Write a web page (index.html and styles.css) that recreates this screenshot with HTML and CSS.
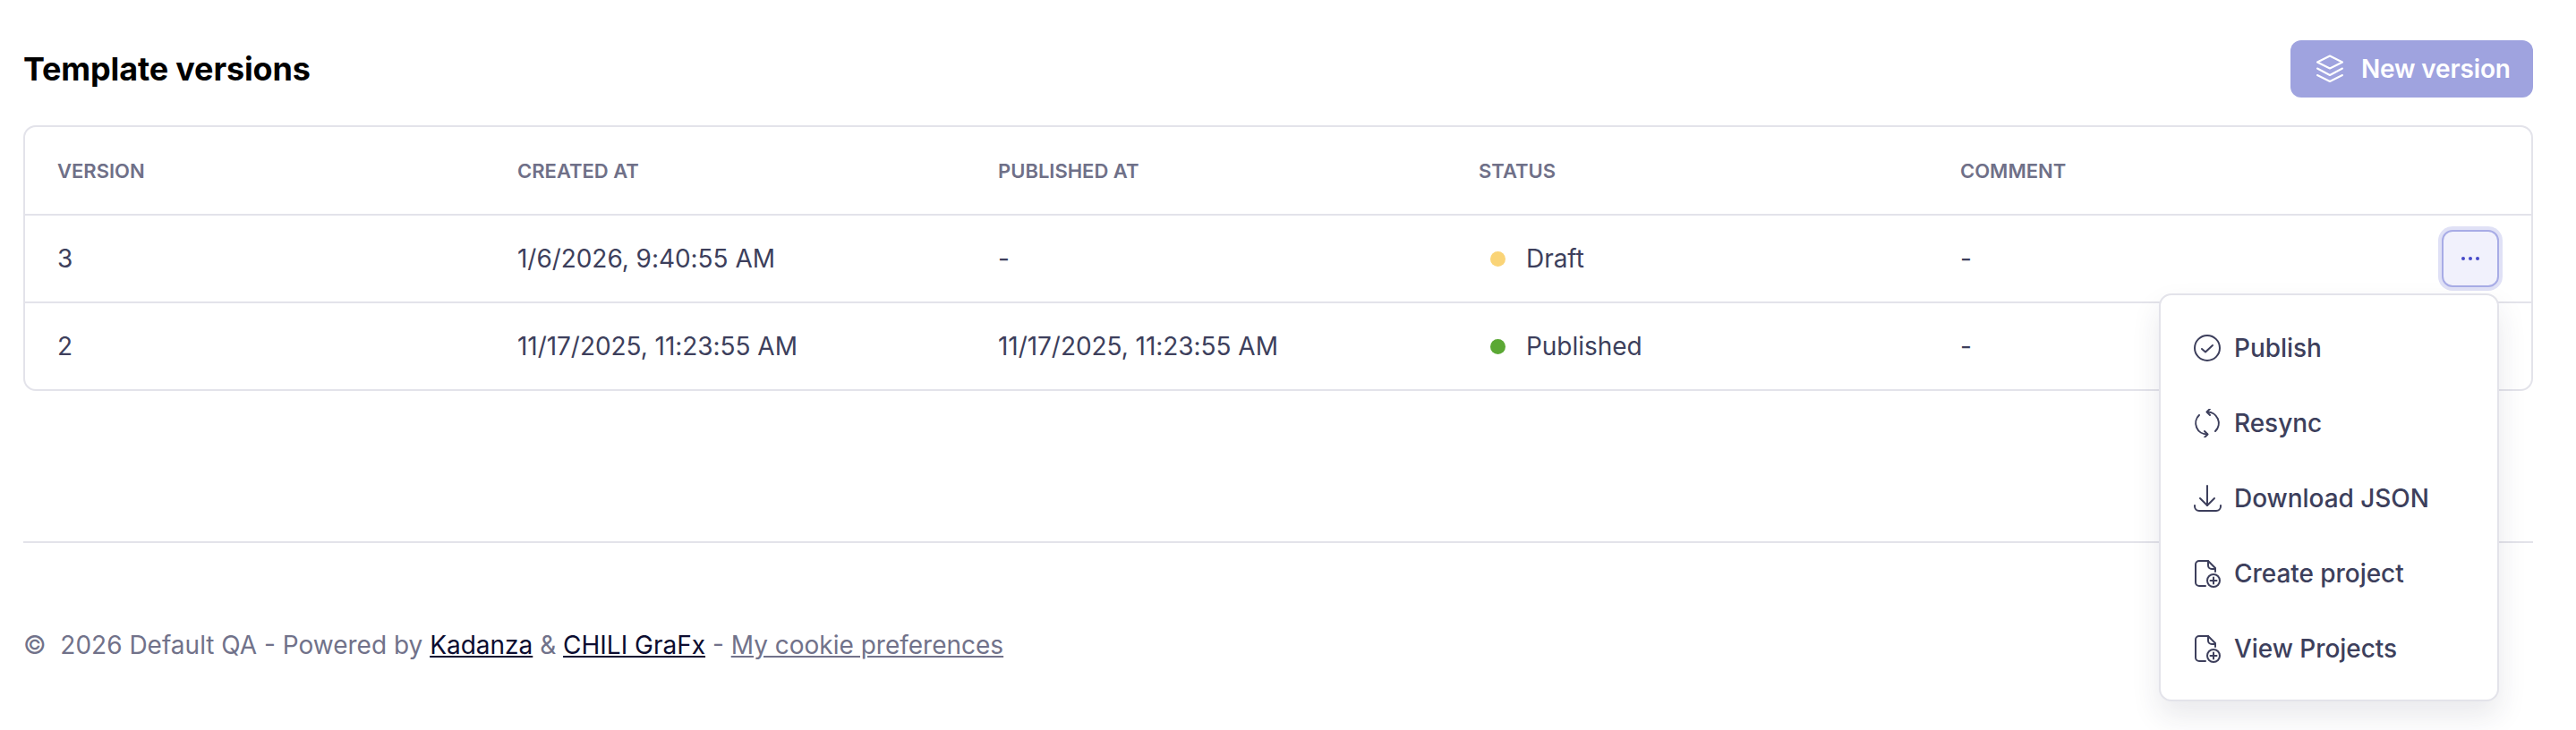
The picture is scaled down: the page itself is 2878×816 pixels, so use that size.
FILE: index.html
```html
<!DOCTYPE html>
<html lang="en">
<head>
<meta charset="utf-8">
<title>Template versions</title>
<link rel="stylesheet" href="styles.css">
</head>
<body>
<main class="page">
  <header class="head">
    <h1 class="title">Template versions</h1>
    <button class="new-btn" type="button">
      <svg class="ico" viewBox="0 0 32 32" fill="none" stroke="currentColor" stroke-width="2" stroke-linejoin="round" stroke-linecap="round"><path d="M16 1.5 30 8.5 16 15.5 2 8.5Z"/><path d="M2 15.5 16 23 30 15.5"/><path d="M2 23 16 30 30 23"/></svg>
      <span>New version</span>
    </button>
  </header>
  <section class="table">
    <div class="row row-head">
      <div>VERSION</div><div>CREATED AT</div><div>PUBLISHED AT</div><div>STATUS</div><div>COMMENT</div>
    </div>
    <div class="row">
      <div>3</div><div>1/6/2026, 9:40:55 AM</div><div>-</div>
      <div class="status"><i class="dot dot-draft"></i>Draft</div>
      <div>-</div>
      <div class="actions">
        <button class="more" type="button" aria-label="More"><i></i><i></i><i></i></button>
        <nav class="menu">
          <a class="item"><svg class="ico" viewBox="0 0 32 32" fill="none" stroke="currentColor" stroke-width="2" stroke-linecap="round" stroke-linejoin="round"><circle cx="16" cy="16" r="14"/><path d="M10 17 14 20.5 22 13"/></svg>Publish</a>
          <a class="item"><svg class="ico" viewBox="0 0 32 32" fill="none" stroke="currentColor" stroke-width="2" stroke-linecap="round" stroke-linejoin="round"><path d="M16 3.5A12.5 12.5 0 0 1 25 25"/><path d="M19 0 15.5 3.5 19 7"/><path d="M16 28.5A12.5 12.5 0 0 1 7 7"/><path d="M13 25 16.5 28.5 13 32"/></svg>Resync</a>
          <a class="item"><svg class="ico" viewBox="0 0 32 32" fill="none" stroke="currentColor" stroke-width="2" stroke-linecap="round" stroke-linejoin="round"><path d="M16 2V24"/><path d="M8 16 16 24 24 16"/><path d="M2 24v1a5 5 0 0 0 5 5H26a5 5 0 0 0 5-5v-1"/></svg>Download JSON</a>
          <a class="item"><svg class="ico" viewBox="0 0 32 32" fill="none" stroke="currentColor" stroke-width="2" stroke-linecap="round" stroke-linejoin="round"><path d="M14 30H7a4 4 0 0 1-4-4V6a4 4 0 0 1 4-4H17L25 10V14"/><path d="M17 2V7a4 4 0 0 0 4 4h4"/><circle cx="23" cy="24" r="7"/><path d="M23 20.5V27.5M19.5 24H26.5"/></svg>Create project</a>
          <a class="item"><svg class="ico" viewBox="0 0 32 32" fill="none" stroke="currentColor" stroke-width="2" stroke-linecap="round" stroke-linejoin="round"><path d="M14 30H7a4 4 0 0 1-4-4V6a4 4 0 0 1 4-4H17L25 10V14"/><path d="M17 2V7a4 4 0 0 0 4 4h4"/><circle cx="23" cy="24" r="7"/><path d="M23 20.5V27.5M19.5 24H26.5"/></svg>View Projects</a>
        </nav>
      </div>
    </div>
    <div class="row">
      <div>2</div><div>11/17/2025, 11:23:55 AM</div><div>11/17/2025, 11:23:55 AM</div>
      <div class="status"><i class="dot dot-pub"></i>Published</div>
      <div>-</div>
      <div class="actions"></div>
    </div>
  </section>
  <footer class="foot">
    <p class="foot-text">©&nbsp; 2026 Default QA - Powered by <a class="link-dark">Kadanza</a> &amp; <a class="link-dark">CHILI GraFx</a> - <a class="link-muted">My cookie preferences</a></p>
  </footer>
</main>
</body>
</html>
```
FILE: styles.css
```css
* { box-sizing: border-box; }
html, body { margin: 0; background: #fff; }
body { font-family: Inter, "Liberation Sans", sans-serif; color: #3d3f5c; }
.page { min-height: 816px; padding: 45px 48px 0 26px; }
.head { display: flex; justify-content: space-between; align-items: center; height: 64px; }
.title { margin: 0; font: 700 36px/1 Inter, sans-serif; color: #000; letter-spacing: -0.15px; }
.ico { width: 32px; height: 32px; flex: none; }
.new-btn { display: flex; align-items: center; gap: 19px; height: 64px; width: 271px; padding: 0 0 0 28px; border: 0; border-radius: 12px; background: #9fa3df; color: #fff; font: 600 28px/1 Inter, sans-serif; letter-spacing: -0.15px; }
.table { margin-top: 31px; border: 2px solid #e3e3ea; border-radius: 14px; }
.row { display: grid; grid-template-columns: 514px 537px 537px 538px 1fr 100px; align-items: center; height: 98px; padding-left: 36px; border-top: 2px solid #e3e3ea; font-size: 28px; letter-spacing: -0.05px; }
.row-head { height: 97px; border-top: 0; font-size: 22px; font-weight: 600; color: #6f7088; letter-spacing: 0; }
.status { display: flex; align-items: center; gap: 23px; padding-left: 13px; }
.dot { width: 17px; height: 17px; border-radius: 50%; }
.dot-draft { background: #fad477; }
.dot-pub { background: #5ba834; }
.actions { position: relative; display: flex; align-items: center; height: 100%; }
.more { display: flex; align-items: center; justify-content: center; gap: 4px; width: 64px; height: 64px; padding: 0; border: 2px solid #a8ace6; border-radius: 12px; background: #f1f1fc; box-shadow: 0 0 0 4px #e0e1f6; }
.more i { width: 4px; height: 4px; border-radius: 50%; background: #4649c8; }
.menu { position: absolute; top: 87px; right: 36px; z-index: 2; display: flex; flex-direction: column; width: 380px; height: 456px; padding: 17px 0 15px 36px; background: #fff; border: 2px solid #e3e3ea; border-radius: 14px; box-shadow: 0 16px 32px rgba(40, 40, 70, .1); }
.item { display: flex; align-items: center; gap: 14px; height: 84px; flex: none; font-size: 28px; font-weight: 500; color: #3d3f5c; }
.foot { margin-top: 168px; border-top: 2px solid #e3e3ea; padding-top: 96px; }
.foot-text { margin: 0; font-size: 28px; line-height: 36px; color: #71728a; }
.link-dark { color: #0c0c30; text-decoration: underline; }
.link-muted { color: #71728a; text-decoration: underline; }
```
